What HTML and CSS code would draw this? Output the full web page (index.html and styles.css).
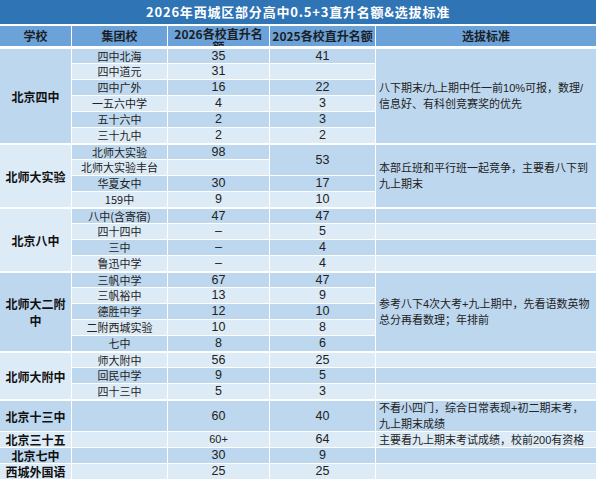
FILE: index.html
```html
<!DOCTYPE html>
<html lang="zh-CN">
<head>
<meta charset="utf-8">
<title>2026年西城区部分高中0.5+3直升名额&amp;选拔标准</title>
<link rel="stylesheet" href="styles.css">
</head>
<body>
<div class="sheet">
  <div class="title">2026年西城区部分高中0.5+3直升名额&amp;选拔标准</div>

  <div class="head">
    <div class="hc">学校</div>
    <div class="hc">集团校</div>
    <div class="hc wrap">2026各校直升名<br>额</div>
    <div class="hc">2025各校直升名额</div>
    <div class="hc last">选拔标准</div>
  </div>

  <div class="body">
    <!-- 北京四中 -->
    <div class="c school d s6 gs">北京四中</div>
    <div class="c d gs">四中北海</div><div class="c num d gs">35</div><div class="c num d gs">41</div>
    <div class="c crit d s6 gs last">八下期末/九上期中任一前10%可报，数理/<br>信息好、有科创竞赛奖的优先</div>
    <div class="c l">四中道元</div><div class="c num l">31</div><div class="c num l"></div>
    <div class="c d">四中广外</div><div class="c num d">16</div><div class="c num d">22</div>
    <div class="c l">一五六中学</div><div class="c num l">4</div><div class="c num l">3</div>
    <div class="c d">五十六中</div><div class="c num d">2</div><div class="c num d">3</div>
    <div class="c l">三十九中</div><div class="c num l">2</div><div class="c num l">2</div>

    <!-- 北师大实验 -->
    <div class="c school l s4 gs">北师大实验</div>
    <div class="c d gs">北师大实验</div><div class="c num d gs">98</div><div class="c num d s2 gs">53</div>
    <div class="c crit d s4 gs last">本部丘班和平行班一起竞争，主要看八下到<br>九上期末</div>
    <div class="c l">北师大实验丰台</div><div class="c num l"></div>
    <div class="c d">华夏女中</div><div class="c num d">30</div><div class="c num d">17</div>
    <div class="c l">159中</div><div class="c num l">9</div><div class="c num l">10</div>

    <!-- 北京八中 -->
    <div class="c school l s4 gs">北京八中</div>
    <div class="c d gs">八中(含寄宿)</div><div class="c num d gs">47</div><div class="c num d gs">47</div><div class="c crit d gs last"></div>
    <div class="c l">四十四中</div><div class="c num l">–</div><div class="c num l">5</div><div class="c crit l last"></div>
    <div class="c d">三中</div><div class="c num d">–</div><div class="c num d">4</div><div class="c crit d last"></div>
    <div class="c l">鲁迅中学</div><div class="c num l">–</div><div class="c num l">4</div><div class="c crit l last"></div>

    <!-- 北师大二附中 -->
    <div class="c school d s5 gs">北师大二附<br>中</div>
    <div class="c d gs">三帆中学</div><div class="c num d gs">67</div><div class="c num d gs">47</div>
    <div class="c crit d s5 gs last">参考八下4次大考+九上期中，先看语数英物<br>总分再看数理；年排前</div>
    <div class="c l">三帆裕中</div><div class="c num l">13</div><div class="c num l">9</div>
    <div class="c d">德胜中学</div><div class="c num d">12</div><div class="c num d">10</div>
    <div class="c l">二附西城实验</div><div class="c num l">10</div><div class="c num l">8</div>
    <div class="c d">七中</div><div class="c num d">8</div><div class="c num d">6</div>

    <!-- 北师大附中 -->
    <div class="c school l s3 gs">北师大附中</div>
    <div class="c l gs">师大附中</div><div class="c num l gs">56</div><div class="c num l gs">25</div><div class="c crit l gs last"></div>
    <div class="c d">回民中学</div><div class="c num d">9</div><div class="c num d">5</div><div class="c crit d last"></div>
    <div class="c l">四十三中</div><div class="c num l">5</div><div class="c num l">3</div><div class="c crit l last"></div>

    <!-- single schools -->
    <div class="c school d gs">北京十三中</div><div class="c d gs"></div><div class="c num d gs">60</div><div class="c num d gs">40</div>
    <div class="c crit d gs last">不看小四门，综合日常表现+初二期末考，<br>九上期末成绩</div>

    <div class="c school l">北京三十五</div><div class="c l"></div><div class="c num small l">60+</div><div class="c num l">64</div>
    <div class="c crit l last">主要看九上期末考试成绩，校前200有资格</div>

    <div class="c school d">北京七中</div><div class="c d"></div><div class="c num d">30</div><div class="c num d">9</div><div class="c crit d last"></div>

    <div class="c school l">西城外国语</div><div class="c l"></div><div class="c num l">25</div><div class="c num l">25</div><div class="c crit l last"></div>
  </div>
</div>
</body>
</html>
```
FILE: styles.css
```css
html, body {
  margin: 0;
  padding: 0;
  background: #ffffff;
}

body {
  font-family: "Liberation Sans", "Noto Sans CJK SC", sans-serif;
  color: #1e1e1e;
}

.sheet {
  width: 596px;
  height: 482px;
  overflow: hidden;
}

.title {
  height: 24px;
  line-height: 24px;
  margin-bottom: 2px;
  background: #2f74b5;
  color: #ffffff;
  font-family: "Noto Sans CJK SC", sans-serif;
  font-weight: 700;
  font-size: 13px;
  letter-spacing: 0.8px;
  text-align: center;
}

.head,
.body {
  display: grid;
  grid-template-columns: 72px 96px 102px 106px 220px;
}

.head {
  height: 20px;
  border-bottom: 2px solid #ffffff;
}

.hc {
  height: 20px;
  line-height: 20px;
  overflow: hidden;
  white-space: nowrap;
  text-align: center;
  background: #6ba2d9;
  border-right: 1px solid #ffffff;
  font-family: "Noto Sans CJK SC", sans-serif;
  font-weight: 700;
  font-size: 12px;
  color: #1b1f24;
}

.hc.wrap {
  line-height: 13px;
  padding-top: 1px;
  height: 20px;
  box-sizing: border-box;
}

.hc.last,
.c.last {
  border-right: 0;
}

.body {
  grid-template-rows: repeat(22, 16px) 32px repeat(3, 16px);
}

.c {
  box-sizing: border-box;
  display: flex;
  align-items: center;
  justify-content: center;
  border-right: 1px solid #ffffff;
  border-bottom: 1px solid #ffffff;
  font-family: "Noto Sans CJK SC", sans-serif;
  font-size: 11px;
  line-height: 15px;
  white-space: nowrap;
  color: #222222;
  overflow: hidden;
}

.c.gs {
  border-top: 1px solid #ffffff;
}

.d { background: #bdd7ee; }
.l { background: #ddebf7; }

.s2 { grid-row: span 2; }
.s3 { grid-row: span 3; }
.s4 { grid-row: span 4; }
.s5 { grid-row: span 5; }
.s6 { grid-row: span 6; }

.c.num {
  font-family: "Liberation Sans", "Noto Sans CJK SC", sans-serif;
  font-size: 12.5px;
}

.c.num.small {
  font-size: 11px;
}

.c.school {
  font-weight: 700;
  font-size: 12px;
  color: #111111;
  line-height: 17px;
  text-align: center;
}

.c.crit {
  justify-content: flex-start;
  text-align: left;
  padding-left: 3px;
  line-height: 16px;
  font-family: "Liberation Sans", "Noto Sans CJK SC", sans-serif;
  font-size: 11px;
}
```
